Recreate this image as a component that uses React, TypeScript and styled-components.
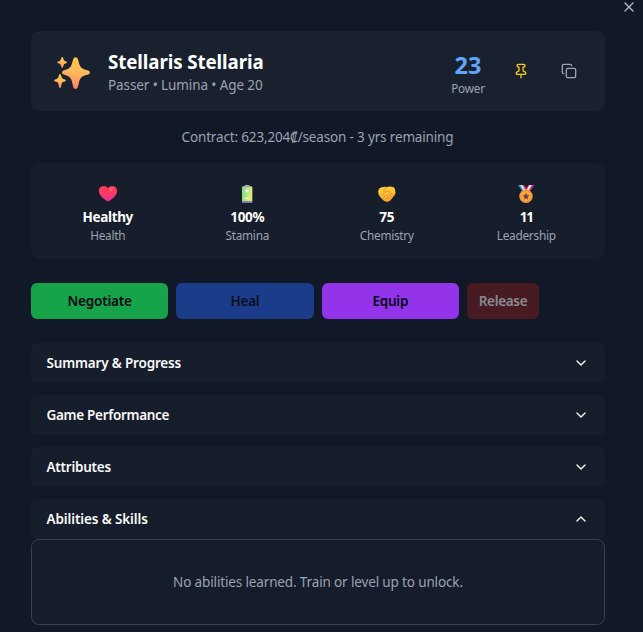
import React, { useState } from 'react';
import styled, { createGlobalStyle } from 'styled-components';
import { ChevronDown, ChevronUp, Copy, Pin, X } from 'lucide-react';

const GlobalStyle = createGlobalStyle`
  *, *::before, *::after { box-sizing: border-box; }
  html, body { margin: 0; background: #111827; }
  body {
    height: 632px;
    overflow: hidden;
    font-family: 'Noto Sans', 'Open Sans', sans-serif;
    font-size: 13.5px;
    color: #f9fafb;
  }
  button { font-family: inherit; border: 0; padding: 0; cursor: pointer; }
  svg { display: block; flex: none; }
`;

const Dialog = styled.main`
  display: flex;
  flex-direction: column;
  width: 643px;
  height: 632px;
  overflow: hidden;
  background: #111827;
`;

const TopBar = styled.div`
  display: flex;
  justify-content: flex-end;
  height: 31px;
  padding: 0 6px 0 0;
`;

const CloseButton = styled.button`
  align-self: flex-start;
  height: 16px;
  margin-top: -1px;
  background: none;
  color: #f9fafb;
  opacity: 0.7;
`;

const Content = styled.div`
  display: flex;
  flex-direction: column;
  width: 574px;
  margin-left: 31px;
`;

const Header = styled.header`
  display: flex;
  align-items: center;
  height: 80px;
  padding: 0 16px 0 22px;
  border-radius: 8px;
  background: #19212f;

  > svg { margin-top: 4px; }
`;

const Identity = styled.div`
  flex: 1;
  padding: 2px 0 0 17px;
`;

const PlayerName = styled.h2`
  margin: 0;
  font-size: 18.7px;
  font-weight: 700;
  line-height: 26px;
  letter-spacing: -0.08px;
  white-space: nowrap;
  color: #fff;
`;

const PlayerMeta = styled.p`
  margin: 0;
  line-height: 20px;
  letter-spacing: -0.1px;
  white-space: nowrap;
  color: #9ca3af;
`;

const Power = styled.div`
  width: 34px;
  margin-right: 16px;
  padding-top: 5px;
  display: flex;
  flex-direction: column;
  align-items: center;
`;

const PowerValue = styled.strong`
  font-size: 23.5px;
  font-weight: 700;
  line-height: 28px;
  color: #60a5fa;
`;

const Caption = styled.span`
  font-size: 11.8px;
  line-height: 18px;
  letter-spacing: -0.25px;
  color: #9ca3af;
`;

const IconButton = styled.button<{ $color: string }>`
  display: flex;
  align-items: center;
  justify-content: center;
  width: 40px;
  height: 40px;
  margin-left: 8px;
  background: none;
  color: ${(p) => p.$color};

  &:first-of-type { margin-left: 0; }
`;

const Contract = styled.p`
  margin: 0;
  height: 52px;
  padding-right: 1px;
  line-height: 52px;
  text-align: center;
  letter-spacing: -0.16px;
  color: #9ca3af;
`;

const Stats = styled.section`
  display: grid;
  grid-template-columns: repeat(4, 1fr);
  height: 96px;
  padding: 21px 9px 0 7px;
  border-radius: 8px;
  background: #161d2b;
`;

const Stat = styled.div`
  display: flex;
  flex-direction: column;
  align-items: center;
`;

const StatValue = styled.strong<{ $tracking: number }>`
  margin-top: 3px;
  font-weight: 700;
  line-height: 20px;
  letter-spacing: ${(p) => p.$tracking}px;
  color: #fff;
`;

const StatLabel = styled(Caption)`
  line-height: 17px;
`;

const Actions = styled.div`
  display: grid;
  grid-template-columns: 137.33px 137.33px 137.33px 72px;
  gap: 8px;
  margin: 24px 0;
`;

const ActionButton = styled.button<{ $bg: string; $fg?: string; $tracking?: number }>`
  height: 36px;
  border-radius: 6px;
  background: ${(p) => p.$bg};
  color: ${(p) => p.$fg ?? '#020817'};
  font-size: 13.5px;
  font-weight: 600;
  letter-spacing: ${(p) => p.$tracking ?? -0.2}px;

  &:disabled { opacity: 0.5; cursor: default; }
`;

const Sections = styled.div`
  display: flex;
  flex-direction: column;
  gap: 12px;
`;

const SectionHeader = styled.button<{ $tracking: number }>`
  display: flex;
  align-items: center;
  justify-content: space-between;
  width: 100%;
  height: 40px;
  padding: 0 16px 0 15.5px;
  border-radius: 6px;
  background: #161d2b;
  color: #f9fafb;
  font-size: 13.5px;
  font-weight: 600;
  letter-spacing: ${(p) => p.$tracking}px;
`;

const SectionBody = styled.div`
  display: flex;
  align-items: center;
  justify-content: center;
  height: 86px;
  border: 1px solid #374151;
  border-radius: 8px;
  background: #151c2b;
  letter-spacing: -0.14px;
  color: #9ca3af;
`;

const Sparkles = () => (
  <svg width="38" height="36" viewBox="0 0 38 36">
    <defs>
      <linearGradient id="sparkle" x1="0.6" y1="0" x2="0.4" y2="1">
        <stop offset="0" stopColor="#fbc845" />
        <stop offset="0.5" stopColor="#ffb75c" />
        <stop offset="1" stopColor="#fd8068" />
      </linearGradient>
    </defs>
    <g fill="url(#sparkle)">
      <path d="M22.500 2.200q1.800 0 2.300 1.700l1.500 5.200q1.200 4.300 5.400 5.500l3.500 1q1.700.5 1.700 1.900t-1.700 2l-3.500 1q-4.200 1.300-5.400 5.500l-1.500 6.200Q24.300 34 22.500 34t-2.200-1.800l-1.500-6.200q-1.200-4.200-5.400-5.500l-2.800-1q-1.600-.6-1.600-2t1.600-1.900l2.800-1q4.200-1.200 5.400-5.500l1.500-5.200Q20.700 2.200 22.500 2.200z" />
      <path d="M9.200 2q.7 0 .9.8l.5 1.700q.4 1.300 1.700 1.700l1 .3q.7.3.7.9t-.7.8l-1 .3q-1.300.4-1.700 1.700l-.5 1.800q-.2.8-.9.8t-.9-.8l-.5-1.800Q7.400 8.900 6.100 8.500l-1-.3Q4.400 8 4.400 7.400t.7-.9l1-.3q1.300-.4 1.700-1.700l.5-1.700Q8.500 2 9.200 2z" />
      <path d="M7 19q.8 0 1 .9l.6 2.100q.4 1.500 1.900 1.900l1.500.5q.9.300.9 1t-.9 1l-1.500.4q-1.500.5-1.900 2l-.6 3.200q-.2 1-1 1t-1-1l-.6-3.200q-.4-1.500-1.900-2L2 26.400q-.9-.3-.9-1t.9-1l1.500-.5q1.500-.4 1.900-1.900L6 19.900Q6.200 19 7 19z" />
    </g>
  </svg>
);

const Heart = () => (
  <svg width="20" height="20" viewBox="0 0 20 20">
    <defs>
      <linearGradient id="heart" x1="0.4" y1="0" x2="0.5" y2="1">
        <stop offset="0" stopColor="#ff3b53" />
        <stop offset="0.5" stopColor="#fb3a64" />
        <stop offset="1" stopColor="#f32c9f" />
      </linearGradient>
      <radialGradient id="heartShine">
        <stop offset="0" stopColor="#ff7480" />
        <stop offset="1" stopColor="#ff4858" stopOpacity="0" />
      </radialGradient>
    </defs>
    <path d="M10 4.200C8.400 2 5.700 1.300 3.500 2.500 1.200 3.700.4 6.200 1.100 8.700c1 3.600 4.700 6.300 7.700 8.200q1.200.8 2.400 0c3-1.900 6.700-4.600 7.700-8.200.7-2.500-.1-5-2.400-6.200C14.300 1.300 11.600 2 10 4.200z" fill="url(#heart)" />
    <circle cx="13" cy="5.500" r="3.500" fill="url(#heartShine)" />
    <path d="M10 4.200q1.100 2.300 0 4.200-1.100-1.900 0-4.200z" fill="#ce2438" opacity="0.6" />
  </svg>
);

const Battery = () => (
  <svg width="20" height="20" viewBox="0 0 20 20">
    <defs>
      <linearGradient id="cell" x1="0" y1="0" x2="1" y2="0.2">
        <stop offset="0" stopColor="#78d995" />
        <stop offset="0.6" stopColor="#b5e77e" />
        <stop offset="1" stopColor="#d9f174" />
      </linearGradient>
    </defs>
    <rect x="7.500" y="1" width="5" height="2.500" rx="1" fill="#b9b2bd" />
    <rect x="5" y="2" width="10.200" height="17" rx="1.200" fill="#a29aa9" />
    <rect x="5" y="3" width="10.200" height="14.500" fill="url(#cell)" />
    <rect x="5" y="17.200" width="10.200" height="1.800" rx="0.800" fill="#8a6da3" />
    <path d="M10 4.900v3.400M8.300 6.600h3.400M8.300 14.400h3.400" stroke="#fff" strokeWidth="1.300" />
  </svg>
);

const Handshake = () => (
  <svg width="20" height="20" viewBox="0 0 20 20">
    <defs>
      <linearGradient id="hands" x1="0.3" y1="0" x2="0.7" y2="1">
        <stop offset="0" stopColor="#ffd13d" />
        <stop offset="0.6" stopColor="#fdb932" />
        <stop offset="1" stopColor="#f29a30" />
      </linearGradient>
    </defs>
    <path d="M4 3.500q2.800-1 6-.6 3.500-.7 6.800.3 2 1.900 1.700 5.200-.2 2.500-2 4.200l-3 3.600q-2.100 2.200-4.500 1.500-2-.7-4.200-3L2.500 12Q1 10 1.200 7.100 1.500 4.400 4 3.500z" fill="url(#hands)" />
    <path d="M10 3.100Q7.200 4.300 6.700 6.600q.2 1.900 2.200 1.400l2-1.300 5.600 5M4.500 11.600l2.200-1.800M6.300 13.600l2.200-2M8.300 15.400l1.700-1.700M12 10.200l2.500 3M10.200 12l2.300 3" fill="none" stroke="#cf8128" strokeWidth="0.700" strokeLinecap="round" strokeLinejoin="round" />
  </svg>
);

const Medal = () => (
  <svg width="20" height="20" viewBox="0 0 20 20">
    <path d="M2 1h5.500l4.300 6.500H6.400z" fill="#348be8" />
    <path d="M4.200 1h2.300l4.300 6.500H8.300z" fill="#eef0ff" />
    <path d="M6.200 1h2l3.500 5-1.300 1.500z" fill="#df305f" />
    <path d="M18 1h-5.500L8.600 7.500h5.200z" fill="#ed356b" />
    <path d="M15.800 1h-2.300L9.600 7.500H12z" fill="#e7edff" />
    <circle cx="10" cy="12.300" r="6.700" fill="#f7a038" />
    <circle cx="10" cy="12.300" r="5.300" fill="#fba83e" stroke="#e58c32" strokeWidth="0.500" />
    <path d="m10 9.300.9 1.900 2.100.3-1.600 1.500.4 2.100-1.800-1-1.800 1 .4-2.100L7 11.500l2.100-.3z" fill="#753e4b" stroke="#753e4b" strokeWidth="0.500" strokeLinejoin="round" />
  </svg>
);

const stats = [
  { icon: <Heart />, value: 'Healthy', label: 'Health', tracking: -0.35 },
  { icon: <Battery />, value: '100%', label: 'Stamina', tracking: -0.35 },
  { icon: <Handshake />, value: '75', label: 'Chemistry', tracking: -0.1 },
  { icon: <Medal />, value: '11', label: 'Leadership', tracking: -1.2 },
];

const sections = [
  { name: 'Summary & Progress', tracking: -0.17 },
  { name: 'Game Performance', tracking: -0.3 },
  { name: 'Attributes', tracking: -0.25 },
  { name: 'Abilities & Skills', tracking: -0.12 },
];

export default function App() {
  const [open, setOpen] = useState('Abilities & Skills');

  return (
    <>
      <GlobalStyle />
      <Dialog>
        <TopBar>
          <CloseButton aria-label="Close"><X size={16} /></CloseButton>
        </TopBar>
        <Content>
          <Header>
            <Sparkles />
            <Identity>
              <PlayerName>Stellaris Stellaria</PlayerName>
              <PlayerMeta>Passer • Lumina • Age 20</PlayerMeta>
            </Identity>
            <Power>
              <PowerValue>23</PowerValue>
              <Caption>Power</Caption>
            </Power>
            <IconButton $color="#facc15" aria-label="Pin"><Pin size={16} /></IconButton>
            <IconButton $color="#9ca3af" aria-label="Copy"><Copy size={16} /></IconButton>
          </Header>
          <Contract>Contract: 623,204₡/season - 3 yrs remaining</Contract>
          <Stats>
            {stats.map((s) => (
              <Stat key={s.label}>
                {s.icon}
                <StatValue $tracking={s.tracking}>{s.value}</StatValue>
                <StatLabel>{s.label}</StatLabel>
              </Stat>
            ))}
          </Stats>
          <Actions>
            <ActionButton $bg="#16a34a">Negotiate</ActionButton>
            <ActionButton $bg="#2563eb" disabled>Heal</ActionButton>
            <ActionButton $bg="#9333ea">Equip</ActionButton>
            <ActionButton $bg="#7f1d1d" $fg="#f9fafb" $tracking={-0.3} disabled>Release</ActionButton>
          </Actions>
          <Sections>
            {sections.map(({ name, tracking }) => (
              <section key={name}>
                <SectionHeader
                  $tracking={tracking}
                  aria-expanded={open === name}
                  onClick={() => setOpen(open === name ? '' : name)}
                >
                  {name}
                  {open === name ? <ChevronUp size={16} /> : <ChevronDown size={16} />}
                </SectionHeader>
                {open === name && (
                  <SectionBody>No abilities learned. Train or level up to unlock.</SectionBody>
                )}
              </section>
            ))}
          </Sections>
        </Content>
      </Dialog>
    </>
  );
}
